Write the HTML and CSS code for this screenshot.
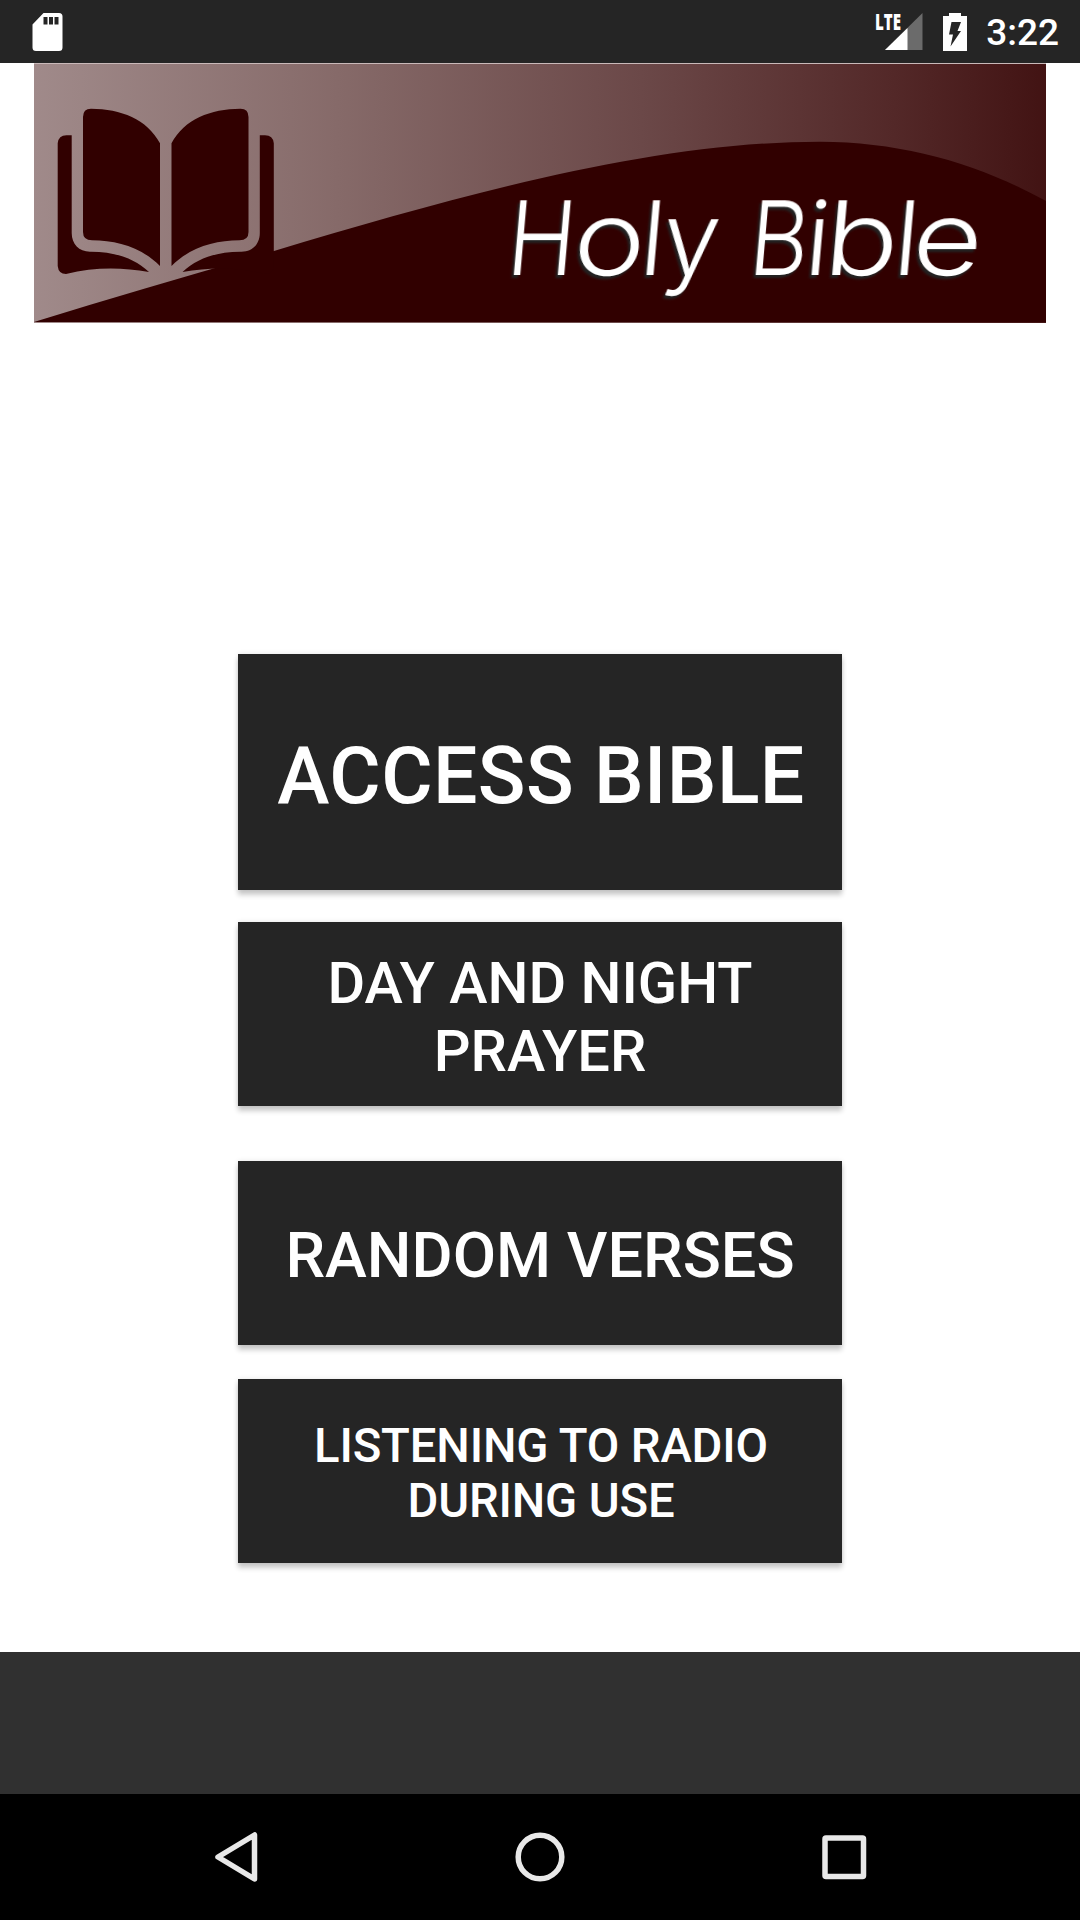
FILE: index.html
```html
<!DOCTYPE html>
<html lang="en">
<head>
    <meta charset="UTF-8">
    <meta name="viewport" content="width=device-width, initial-scale=1.0">
    <title>Holy Bible</title>
    <link rel="stylesheet" href="styles.css">
</head>
<body>
    <header class="status-bar">
        <svg class="sd-card" width="31" height="38" viewBox="0 0 31 38">
            <path fill="#fff" fill-rule="evenodd" d="M11.5 0H27a3.5 3.5 0 0 1 3.5 3.5v31A3.500 3.500 0 0 1 27 38H4a3.500 3.500 0 0 1-3.500-3.500V11.500zM11.500 4v7.500h4V4zM17 4v7.500h4V4zM22.500 4v7.500h4V4z"/>
        </svg>
        <svg class="signal" width="50" height="62" viewBox="-2 -12 50 62">
            <path fill="#6b6b6b" d="M47.500 0v37H10z"/>
            <path fill="#fff" d="M32.500 15v22H10z"/>
            <path fill="#252525" d="M0 0h26.500v18.500H0z"/>
            <text class="lte" x="0" y="17" textLength="26" lengthAdjust="spacingAndGlyphs">LTE</text>
        </svg>
        <svg class="battery" width="24" height="38" viewBox="0 0 24 38">
            <path fill="#fff" d="M6 0h12v3h6v35H0V3h6z"/>
            <path fill="#252525" d="M8.500 9H18l-3.500 9H18L7.500 33.500 10 21.500H6z"/>
        </svg>
        <span class="clock">3:22</span>
    </header>

    <main class="home">
        <svg class="banner" width="1012" height="260" viewBox="0 0 1012 260">
            <defs>
                <linearGradient id="sky">
                    <stop offset="0" stop-color="#a08a8a"/>
                    <stop offset=".3" stop-color="#866a69"/>
                    <stop offset=".6" stop-color="#6b4848"/>
                    <stop offset=".85" stop-color="#532828"/>
                    <stop offset="1" stop-color="#421313"/>
                </linearGradient>
                <g id="half-book">
                    <path d="M49 54Q49 45.700 57 45.700C87 46 113 56 126 80.300V203C107 184 83 177.500 58 177.300Q49 177.300 49 169Z"/>
                    <path d="M23.700 80.300Q24.500 72.300 32.500 72.300H37.700V170C37.700 181 45 188.700 56 188.700C80 188.500 100 195 115 209C87 204 60 204 32 211Q24.500 211 23.700 203Z"/>
                </g>
            </defs>
            <rect width="1012" height="260" fill="url(#sky)"/>
            <path fill="#310000" d="M0 259C80 234 160 211 240 188C430 131 620 78.700 786 78.700C870 79 945 101 1012 138V259Z"/>
            <g fill="#310000">
                <use href="#half-book"/>
                <use href="#half-book" transform="translate(263.500 0) scale(-1 1)"/>
            </g>
            <path fill="none" stroke="#c9b9b9" d="M0 .5H1012"/>
            <g transform="translate(0 212) skewX(-5)">
                <!-- round letters are stretched, capitals are narrowed -->
                <text class="title" y="0" lengthAdjust="spacingAndGlyphs"><tspan x="471" textLength="68" lengthAdjust="spacingAndGlyphs">H</tspan><tspan x="537" textLength="72" lengthAdjust="spacingAndGlyphs">o</tspan><tspan x="604">l</tspan><tspan x="626">y</tspan> <tspan x="713" textLength="59" lengthAdjust="spacingAndGlyphs">B</tspan><tspan x="769">i</tspan><tspan x="788" textLength="74" lengthAdjust="spacingAndGlyphs">b</tspan><tspan x="858">l</tspan><tspan x="876" textLength="70" lengthAdjust="spacingAndGlyphs">e</tspan></text>
            </g>
        </svg>

        <nav class="menu">
            <button class="item access">Access Bible</button>
            <button class="item prayer">Day and night prayer</button>
            <button class="item verses">Random verses</button>
            <button class="item radio">Listening to radio during use</button>
        </nav>
    </main>

    <div class="ad-space"></div>

    <footer class="nav-bar">
        <svg width="50" height="50" viewBox="0 0 50 50">
            <path d="M43.500 3V47L7 25Z"/>
        </svg>
        <svg width="50" height="50" viewBox="0 0 50 50">
            <circle cx="25" cy="25" r="21.800"/>
        </svg>
        <svg width="50" height="50" viewBox="0 0 50 50">
            <rect x="6" y="6" width="38.500" height="38.500" rx="1"/>
        </svg>
    </footer>
</body>
</html>
```

FILE: styles.css
```css
* {
    box-sizing: border-box;
}

body {
    margin: 0;
    width: 1080px;
    height: 1920px;
    display: flex;
    flex-direction: column;
    overflow: hidden;
    font-family: Roboto, sans-serif;
    background: white;
}

svg {
    display: block;
    flex: none;
}

.status-bar {
    height: 63px;
    padding: 0 21px 0 32px;
    display: flex;
    align-items: center;
    background: #252525;
    color: white;
}

.signal {
    margin-left: auto;
}

.lte {
    font-family: "Open Sans", sans-serif;
    font-size: 23px;
    font-weight: 800;
    fill: white;
}

.battery {
    margin-left: 20px;
}

.clock {
    margin-left: 19px;
    padding-top: 2px;
    font-size: 37px;
    font-weight: 500;
}

.home {
    height: 1589px;
    display: flex;
    flex-direction: column;
    align-items: center;
}

.title {
    font-family: Inter, sans-serif;
    font-size: 103px;
    font-weight: 300;
    fill: white;
    filter: drop-shadow(-2px 3px 1px #222);
}

.menu {
    width: 604px;
    margin-top: 331px;
    display: flex;
    flex-direction: column;
}

.item {
    height: 184px;
    padding: 5px 20px 0;
    border: none;
    background: #252525;
    color: white;
    font-family: inherit;
    font-weight: 500;
    line-height: 1.172;
    text-transform: uppercase;
    box-shadow: 0 5px 5px rgba(0,0,0,0.2), 0 0 5px rgba(0,0,0,0.1);
}

.access {
    height: 236px;
    padding: 8px 20px 0 22px;
    font-size: 78.75px;
    letter-spacing: 0.4px;
}

.prayer {
    margin-top: 32px;
    padding: 8px 80px 0;
    font-size: 57.75px;
}

.verses {
    margin-top: 55px;
    font-size: 63px;
}

.radio {
    margin-top: 34px;
    padding: 6px 69px 0 71px;
    font-size: 47.25px;
    line-height: 55px;
    letter-spacing: -0.15px;
}

.ad-space {
    height: 142px;
    background: #303030;
}

.nav-bar {
    height: 126px;
    padding: 0 211px;
    display: flex;
    align-items: center;
    justify-content: space-between;
    background: black;
    fill: none;
    stroke: #e8e8e8;
    stroke-width: 5.5;
    stroke-linejoin: round;
}
```
